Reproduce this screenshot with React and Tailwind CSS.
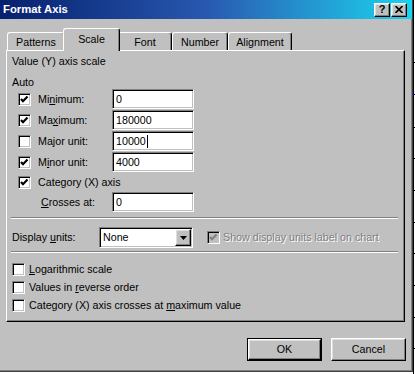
import React from "react";

const sunken =
  "border border-t-[#808080] border-l-[#808080] border-b-white border-r-white shadow-[inset_1px_1px_0_#000,inset_-1px_-1px_0_#c0c0c0]";
const raised =
  "bg-[#c0c0c0] border border-t-white border-l-white border-r-black border-b-black shadow-[inset_-1px_-1px_0_#808080,inset_1px_1px_0_#dfdfdf]";

function Check({ checked, disabled }) {
  return (
    <span
      className={`flex h-[13px] w-[13px] shrink-0 items-center justify-center ${sunken} ${
        disabled ? "bg-[#c0c0c0]" : "bg-white"
      }`}
    >
      {checked && (
        <svg width="9" height="9" viewBox="0 0 9 9">
          <path
            d="M1 4 L3 6.2 L7.5 1.5"
            fill="none"
            stroke={disabled ? "#808080" : "#000"}
            strokeWidth="2.2"
          />
        </svg>
      )}
    </span>
  );
}

function Field({ value, caret }) {
  return (
    <div className={`flex h-[20px] w-[82px] items-center bg-white pl-[3px] ${sunken}`}>
      <span>{value}</span>
      {caret && <span className="ml-px h-[13px] w-px bg-black" />}
    </div>
  );
}

function ScaleRow({ checked, label, value, caret }) {
  return (
    <div className="flex h-[20px] items-center pl-[11px]">
      <Check checked={checked} />
      <span className="ml-[7px] w-[74px]">{label}</span>
      <Field value={value} caret={caret} />
    </div>
  );
}

function Tab({ label, width, selected }) {
  if (selected) {
    return (
      <div
        className="relative z-10 -mx-[2px] -mb-px flex h-[23px] items-start justify-center rounded-t-[3px] border-l border-t border-r border-l-white border-t-white border-r-black bg-[#c0c0c0] pt-[4px] shadow-[inset_-1px_0_0_#808080]"
        style={{ width }}
      >
        {label}
      </div>
    );
  }
  return (
    <div
      className="flex h-[18px] items-start justify-center rounded-t-[3px] border-l border-t border-r border-l-white border-t-white border-r-black pt-[3px] shadow-[inset_-1px_0_0_#808080]"
      style={{ width }}
    >
      {label}
    </div>
  );
}

export default function App() {
  const ticks = [62, 127, 158, 190, 222, 253, 285, 317, 348];
  return (
    <div className="flex h-[374px] w-[415px] bg-white text-[10.7px] leading-[13px] text-black font-['Liberation_Sans',Arial,sans-serif]">
      <div className="flex h-[372px] w-[413px] shrink-0 flex-col border-r border-b border-r-[#404040] border-b-[#404040] bg-[#c0c0c0] shadow-[inset_-1px_-1px_0_#808080]">
        {/* title bar */}
        <div className="flex h-[19px] items-center justify-between bg-gradient-to-r from-[#08206e] via-[#2858b0] to-[#18d4ee] pl-[3px] pr-[5px]">
          <span className="text-[11.3px] font-bold text-white">Format Axis</span>
          <div className="flex gap-[1px]">
            <div className={`flex h-[14px] w-[16px] items-center justify-center text-[11px] font-bold leading-none ${raised}`}>
              ?
            </div>
            <div className={`flex h-[14px] w-[16px] items-center justify-center ${raised}`}>
              <svg width="8" height="7" viewBox="0 0 8 7">
                <path d="M0.5 0 L7.5 7 M7.5 0 L0.5 7" stroke="#000" strokeWidth="1.6" />
              </svg>
            </div>
          </div>
        </div>

        {/* tabs */}
        <div className="mt-[9px] flex h-[22px] items-end pl-[7px]">
          <Tab label="Patterns" width={58} />
          <Tab label="Scale" width={57} selected />
          <Tab label="Font" width={54} />
          <Tab label="Number" width={56} />
          <Tab label="Alignment" width={64} />
        </div>

        {/* panel */}
        <div className="ml-[6px] flex h-[272px] w-[399px] flex-col border border-t-white border-l-white border-r-black border-b-black shadow-[inset_-1px_-1px_0_#808080]">
          <div className="mt-[4px] pl-[5px]">Value (Y) axis scale</div>
          <div className="mt-[8px] pl-[5px]">Auto</div>

          <div className="flex flex-col gap-[1px]">
            <ScaleRow checked label={<>Mi<u>n</u>imum:</>} value="0" />
            <ScaleRow checked label={<>Ma<u>x</u>imum:</>} value="180000" />
            <ScaleRow label={<>Ma<u>j</u>or unit:</>} value="10000" caret />
            <ScaleRow checked label={<>M<u>i</u>nor unit:</>} value="4000" />
          </div>
          <div className="mt-[1px] flex h-[19px] items-center pl-[11px]">
            <Check checked />
            <span className="ml-[7px]">Category (X) axis</span>
          </div>
          <div className="flex h-[20px] items-center pl-[34px]">
            <span className="w-[71px]">
              <u>C</u>rosses at:
            </span>
            <Field value="0" />
          </div>

          <div className="ml-[4px] mr-[6px] mt-[5px] h-[2px] border-t border-b border-t-[#808080] border-b-white" />

          <div className="mt-[8px] flex h-[21px] items-center pl-[5px]">
            <span className="w-[87px]">
              Display <u>u</u>nits:
            </span>
            <div className={`flex h-[21px] w-[94px] items-center justify-between bg-white pl-[3px] pr-[1px] ${sunken}`}>
              <span>None</span>
              <div className={`flex h-[17px] w-[16px] items-center justify-center ${raised}`}>
                <svg width="7" height="4" viewBox="0 0 7 4">
                  <path d="M0 0 H7 L3.5 4 Z" fill="#000" />
                </svg>
              </div>
            </div>
            <div className="ml-[14px] flex items-center">
              <Check checked disabled />
              <span className="ml-[3px] text-[#808080] [text-shadow:1px_1px_0_#fff]">
                Show display units label on chart
              </span>
            </div>
          </div>

          <div className="ml-[4px] mr-[6px] mt-[3px] h-[2px] border-t border-b border-t-[#808080] border-b-white" />

          <div className="mt-[7px] flex flex-col pl-[5px]">
            <div className="flex h-[18px] items-center gap-[4px]">
              <Check />
              <span>
                <u>L</u>ogarithmic scale
              </span>
            </div>
            <div className="flex h-[18px] items-center gap-[4px]">
              <Check />
              <span>
                Values in <u>r</u>everse order
              </span>
            </div>
            <div className="flex h-[18px] items-center gap-[4px]">
              <Check />
              <span>
                Category (X) axis crosses at <u>m</u>aximum value
              </span>
            </div>
          </div>
        </div>

        {/* buttons */}
        <div className="mt-[16px] flex justify-end gap-[9px] pr-[6px]">
          <div className="h-[23px] w-[75px] border border-black">
            <div className={`flex h-full w-full items-center justify-center ${raised}`}>OK</div>
          </div>
          <div className={`flex h-[23px] w-[75px] items-center justify-center ${raised}`}>Cancel</div>
        </div>
      </div>

      <svg width="2" height="374" viewBox="0 0 2 374" className="shrink-0">
        <line x1="0.5" y1="0" x2="0.5" y2="374" stroke="#000" />
        {ticks.map((y) => (
          <line key={y} x1="0" y1={y + 0.5} x2="2" y2={y + 0.5} stroke="#000" />
        ))}
        <line x1="0" y1="94.5" x2="2" y2="94.5" stroke="#0000c0" />
      </svg>
    </div>
  );
}
